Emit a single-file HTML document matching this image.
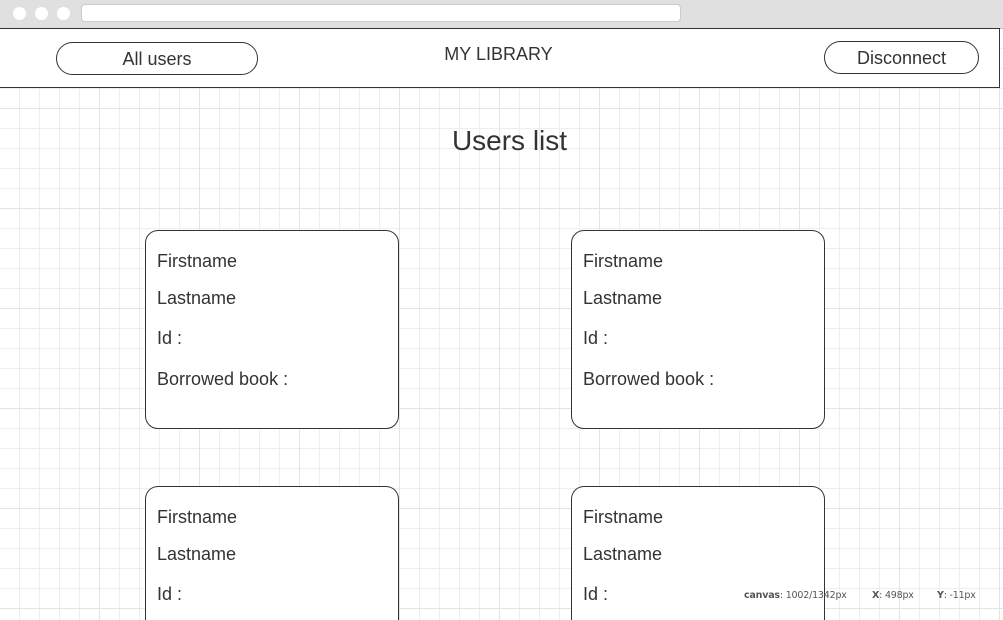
<!DOCTYPE html>
<html style="width:1003px;height:620px;overflow:hidden"><head><style>
*{margin:0;padding:0;box-sizing:border-box}
body{width:1003px;height:620px;overflow:hidden;position:relative;font-family:"Liberation Sans",sans-serif;color:#333;
background-color:#fff;
background-image:
linear-gradient(to right,#e4e4e4 1px,transparent 1px),
linear-gradient(to bottom,#e4e4e4 1px,transparent 1px),
linear-gradient(to right,#eeeeee 1px,transparent 1px),
linear-gradient(to bottom,#eeeeee 1px,transparent 1px);
background-size:100px 100px,100px 100px,20px 20px,20px 20px;
background-position:99px 8px,99px 8px,19px 8px,19px 8px;}
.top{position:absolute;left:0;top:0;width:1003px;height:29px;background:#e0e0e0;border-bottom:1px solid #bbb}
.dot{position:absolute;top:7px;width:13px;height:13px;border-radius:50%;background:#fff}
.url{position:absolute;left:81px;top:4px;width:600px;height:18px;background:#fff;border-radius:4px;border:1px solid #ccc}
.hdr{position:absolute;left:-1px;top:28px;width:1001px;height:60px;background:#fff;border:1px solid #333}
.btn{position:absolute;height:33px;border:1px solid #333;border-radius:17px;font-size:18px;text-align:center;line-height:33px;background:#fff}
.title{position:absolute;left:0;width:1003px;text-align:center}
.card{position:absolute;width:254px;height:199px;border:1px solid #333;border-radius:13px;background:#fff;font-size:18px}
.card.b{height:134px;border-bottom:none;border-radius:13px 13px 0 0}
.card div{position:absolute;left:11px}
.st{position:absolute;top:590px;font-size:9.5px;color:#555;font-family:"DejaVu Sans",sans-serif;letter-spacing:-0.2px}
</style></head><body>
<div class="top"><div class="dot" style="left:13px"></div><div class="dot" style="left:35px"></div><div class="dot" style="left:57px"></div><div class="url"></div></div>
<div class="hdr"></div>
<div class="btn" style="left:56px;top:42px;width:202px">All users</div>
<div class="title" style="top:44px;font-size:18px;left:-3px">MY LIBRARY</div>
<div class="btn" style="left:824px;top:41px;width:155px">Disconnect</div>
<div class="title" style="top:125px;font-size:28px;left:8px">Users list</div>

<div class="card" style="left:145px;top:230px"><div style="top:20px">Firstname</div><div style="top:57px">Lastname</div><div style="top:97px">Id :</div><div style="top:138px">Borrowed book :</div></div>
<div class="card" style="left:571px;top:230px"><div style="top:20px">Firstname</div><div style="top:57px">Lastname</div><div style="top:97px">Id :</div><div style="top:138px">Borrowed book :</div></div>
<div class="card b" style="left:145px;top:486px"><div style="top:20px">Firstname</div><div style="top:57px">Lastname</div><div style="top:97px">Id :</div></div>
<div class="card b" style="left:571px;top:486px"><div style="top:20px">Firstname</div><div style="top:57px">Lastname</div><div style="top:97px">Id :</div></div>

<div class="st" style="left:744px"><b>canvas</b>: 1002/1342px</div>
<div class="st" style="left:872px"><b>X</b>: 498px</div>
<div class="st" style="left:937px"><b>Y</b>: -11px</div>
</body></html>
